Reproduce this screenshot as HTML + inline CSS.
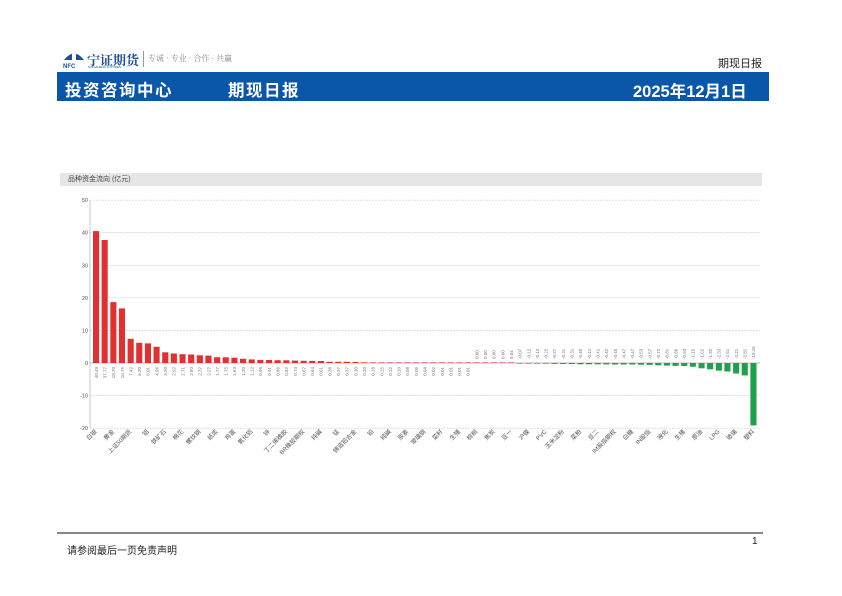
<!DOCTYPE html>
<html><head><meta charset="utf-8"><style>
body{margin:0;width:842px;height:596px;background:#fff;position:relative;overflow:hidden;font-family:"Liberation Sans","Noto Sans CJK SC",sans-serif}
.a{position:absolute}
</style></head><body>
<div class="a" style="left:63px;top:49px;width:22px;height:20px">
<svg width="22" height="20" viewBox="0 0 22 20"><path d="M1 11 Q11 -2 21 11 Z" fill="#1a4f9a"/><rect x="9" y="4" width="4" height="8" fill="#fff"/><text x="0" y="19" font-size="6" font-weight="bold" fill="#1a4f9a" font-family="Liberation Sans">NFC</text></svg></div>
<div class="a" style="left:87px;top:50px;font-size:13px;color:#1a4f9a;font-family:'Noto Serif CJK SC',serif;font-weight:bold">宁证期货</div>
<div class="a" style="left:88px;top:65px;font-size:3px;color:#1a4f9a">NINGZHENG FUTURES</div>
<div class="a" style="left:143px;top:51px;width:1px;height:16px;background:#999"></div>
<div class="a" style="left:148px;top:53px;font-size:8px;color:#888;font-family:'Noto Serif CJK SC',serif">专诚 · 专业 · 合作 · 共赢</div>
<div class="a" style="left:718px;top:55px;font-size:11px;color:#222">期现日报</div>
<div class="a" style="left:57px;top:72px;width:712px;height:29px;background:#0a56a8"></div>
<div class="a" style="left:65px;top:77px;font-size:16.5px;color:#fff;font-weight:bold;letter-spacing:1.5px">投资咨询中心</div>
<div class="a" style="left:228px;top:77px;font-size:16.5px;color:#fff;font-weight:bold;letter-spacing:1.5px">期现日报</div>
<div class="a" style="left:633px;top:78px;font-size:16.5px;color:#fff;font-weight:bold">2025年12月1日</div>
<div class="a" style="left:60px;top:173px;width:702px;height:13px;background:#e6e6e6"></div>
<div class="a" style="left:68px;top:174px;font-size:7px;color:#444">品种资金流向 (亿元)</div>
<svg class="a" style="left:0;top:0" width="842" height="596" id="c"></svg>
<div class="a" style="left:57px;top:532px;width:706px;height:2px;background:#888"></div>
<div class="a" style="left:67px;top:542px;font-size:10px;color:#222">请参阅最后一页免责声明</div>
<div class="a" style="left:752px;top:536px;font-size:10px;color:#222">1</div>
<script>
var pos=[40.49,37.77,18.7,16.75,7.42,6.2,6.01,4.96,3.3,2.92,2.71,2.6,2.37,2.27,1.77,1.75,1.63,1.3,1.12,0.95,0.91,0.86,0.82,0.73,0.67,0.64,0.61,0.38,0.37,0.37,0.3,0.2,0.18,0.15,0.12,0.1,0.08,0.05,0.04,0.02,0.01,0.01,0.01,0.01,0.0,0.0,0.0,0.0];
var neg=[0.04,-0.07,-0.12,-0.12,-0.22,-0.27,-0.31,-0.31,-0.4,-0.41,-0.41,-0.42,-0.45,-0.47,-0.47,-0.53,-0.57,-0.72,-0.81,-0.88,-0.93,-1.15,-1.62,-1.92,-2.33,-2.61,-3.21,-3.81,-19.15];
var v=pos.concat(neg);
var names=["白银","黄金","上证50期货","铝","铁矿石","棉花","螺纹钢","纸浆","鸡蛋","氧化铝","锌","丁二烯橡胶","BR橡胶期权","纯碱","锰","铸造铝合金","铅","纯碱","尿素","玻璃钢","菜籽","生猪","棕榈","焦炭","豆一","沪镍","PVC","玉米淀粉","菜粕","豆二","IM股指期权","白糖","IN股指","液化","生猪","原油","LPG","玻璃","塑料","中证1000期货"];
var s='',x0=92,w=(758-x0)/v.length,z=363,k=3.257;
for(var t=50;t>=-20;t-=10){var y=z-t*k;s+='<line x1="90" x2="760" y1="'+y+'" y2="'+y+'" stroke="#ccc" stroke-dasharray="2,1" stroke-width="0.6"/><text x="88" y="'+(y+2)+'" font-size="5.5" text-anchor="end" fill="#555">'+t+'</text>';}
s+='<line x1="90" x2="90" y1="200" y2="428" stroke="#bbb" stroke-width="0.8"/><line x1="90" x2="760" y1="363" y2="363" stroke="#aaa" stroke-width="0.8"/>';
for(var i=0;i<v.length;i++){var x=x0+i*w+1,h=v[i]*k,c=v[i]>=0?'#e03030':'#1fa04a';
if(Math.abs(h)<0.6)h=v[i]>=0?0.6:-0.6;
s+='<rect x="'+x.toFixed(1)+'" y="'+(h>0?z-h:z).toFixed(1)+'" width="'+(w-2.5).toFixed(1)+'" height="'+Math.abs(h).toFixed(1)+'" fill="'+c+'"/>';
var tx=x+(w-2)/2+1.5;
s+='<text transform="translate('+tx.toFixed(1)+','+(v[i]<0||i>=44?z-4:z+4)+') rotate(-90)" font-size="4.5" fill="#777" text-anchor="'+(v[i]<0||i>=44?'start':'end')+'">'+v[i].toFixed(2)+'</text>';
if(i%2==0){var n=names[i/2]||'';s+='<text transform="translate('+(x+w/2).toFixed(1)+',432) rotate(-45)" font-size="6" fill="#555" text-anchor="end">'+n+'</text>';}}
document.getElementById('c').innerHTML=s;
</script>
</body></html>
